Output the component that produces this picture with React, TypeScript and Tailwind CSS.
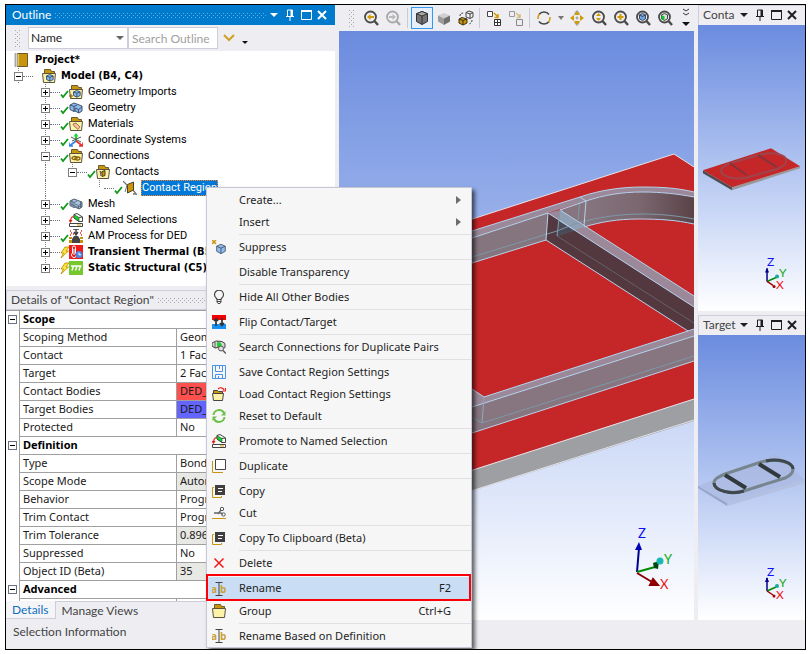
import { useId } from "react";
import type { ReactNode } from "react";

const box = "h-[14px] w-[14px] shrink-0";

function Icon({ name, className = box }: { name: string; className?: string }) {
  return (
    <svg viewBox="0 0 14 14" className={className} fill="none" aria-hidden="true">
      {icons[name]}
    </svg>
  );
}

const folder = (
  <>
    <path d="M2.500 4V.5h6l1 2h3V4" fill="#c8960c" stroke="#6b5a2a" />
    <path d="M.5 4.500h13l-1 9h-11z" fill="#fdf3a8" stroke="#5a5340" />
  </>
);

const cube = (
  <>
    <path d="M7 1l5.500 2.500v6.500L7 13 1.500 10V3.500z" fill="#8fbdf0" stroke="#3d4652" />
    <path d="M1.500 3.500L7 6l5.500-2.500M7 6v7" stroke="#3d4652" />
  </>
);

const smallCube = (
  <g transform="translate(4 5) scale(.55)">
    <path d="M7 1l6 2.500V10l-6 3-6-3V3.500z" fill="#8fbdf0" stroke="#2f4563" strokeWidth="1.600" />
    <path d="M1 3.500L7 6l6-2.500M7 6v7" stroke="#2f4563" strokeWidth="1.600" />
  </g>
);

const named = (
  <>
    <path d="M.5 10.500h13v3H.5z" fill="#fff" stroke="#444" />
    <path d="M8 12h4" stroke="#c8960c" />
    <path d="M5 1.500L8 .5l5.500 3.500v4.500H10L5 5z" fill="#fff" stroke="#444" />
    <path d="M5 1.500l5 3v4L5 5z" fill="#12d52c" stroke="#333" strokeWidth=".6" />
    <path d="M10 4.500l3.500-.5" stroke="#444" />
    <path d="M4.500 3.500C2 4 1.500 6 1.500 8.500M0 7l1.500 2L3 7" stroke="#e8201c" strokeWidth="1.200" />
  </>
);

const copy = (
  <>
    <path d="M2 3.500H.5v10h9V12" stroke="#c8960c" />
    <path d="M3 1h10v10H3z" fill="#3f3f3f" />
    <path d="M6 4.500h5M6 7.500h4" stroke="#fff" />
  </>
);

const rename = (
  <>
    <text x="-1" y="11" fontSize="10" fontWeight="700" fill="#cba13a" fontFamily="Noto Sans, sans-serif">a</text>
    <text x="8" y="11" fontSize="10" fontWeight="700" fill="#cba13a" fontFamily="Noto Sans, sans-serif">b</text>
    <path d="M3.500.5h7M3.500 13.500h7M7 .5v13" stroke="#444" />
  </>
);

const icons: Record<string, ReactNode> = {
  project: (
    <>
      <path d="M3.500.5h10v13h-10z" fill="#c8960c" stroke="#6b5a2a" />
      <path d="M1.500.5v13" stroke="#555" strokeWidth="2" strokeDasharray="1 1" />
      <path d="M4 1v12" stroke="#f5ecc8" />
    </>
  ),
  model: (
    <>
      {folder}
      {smallCube}
    </>
  ),
  imports: (
    <>
      {folder}
      {smallCube}
      <path d="M0 11h4M2 9v4" stroke="#8a6508" />
    </>
  ),
  geometry: (
    <>
      <path d="M1 4l4-2 8 3v5l-3 2-4-2-1 .5-4-2z" fill="#8fb9e8" stroke="#3d5673" />
      <path d="M1 4l4 1.500 3-1.500M5 5.500v5M6 7l3.500 1.500L13 6M9.500 8.500V12M6 7v3" stroke="#3d5673" />
    </>
  ),
  materials: (
    <>
      {folder}
      <path d="M4 7l3-1 4 4-2 2.500L5 9z" fill="#f3c39b" stroke="#a8754a" />
    </>
  ),
  coords: (
    <>
      <path d="M7 8V1" stroke="#1ed83a" strokeWidth="2" />
      <path d="M4.500 3.500L7 0l2.500 3.500z" fill="#1ed83a" />
      <path d="M7 8L1 12.500M0 9.500V13h4" stroke="#2f86e8" strokeWidth="1.600" />
      <path d="M7 8l6 4.500M14 9.500V13h-4" stroke="#e8302c" strokeWidth="1.600" />
      <path d="M2 4l10 5M12 4L3 8" stroke="#555" />
    </>
  ),
  connections: (
    <>
      {folder}
      <ellipse cx="5.500" cy="9" rx="2.500" ry="1.500" stroke="#8a6508" strokeWidth="1.300" />
      <ellipse cx="8.500" cy="9.500" rx="2.500" ry="1.500" stroke="#8a6508" strokeWidth="1.300" />
    </>
  ),
  contacts: (
    <>
      {folder}
      <path d="M4 6l1 5M4 6l5 5" stroke="#555" />
      <path d="M6 6.500l3-1v5l-3 1z" fill="#c8960c" stroke="#4e4020" />
    </>
  ),
  contact: (
    <>
      <path d="M0 0l4 4M10 9l4 5M10 13h3" stroke="#777" strokeWidth="1.300" />
      <path d="M4.500 3.500l6-2.500v8l-6 3z" fill="#c8960c" stroke="#4e4020" />
      <path d="M4 4L2 11" stroke="#777" />
    </>
  ),
  mesh: (
    <>
      <path d="M1 4l4-2 8 3v5l-3 2-4-2-1 .5-4-2z" fill="#a9c3de" stroke="#4d6074" />
      <path d="M1 4l4 1.500 3-1.500M5 5.500v5M6 7l3.500 1.500L13 6M9.500 8.500V12M3 3v6M11.500 5v6M1 6.500l4 2 4 2 4-2.500" stroke="#4d6074" strokeWidth=".8" />
    </>
  ),
  named,
  am: (
    <>
      <path d="M4 0h6M7 0v5M5 3l2 3 2-3" stroke="#444" strokeWidth="1.500" />
      <path d="M1 2h1M12 2h1M2 4h1M11 4h1M1 6h1M12 6h1M4 5h1" stroke="#e22" strokeWidth="1.300" />
      <path d="M3 14v-4l2-3h4l2 3v4z" fill="#444" />
      <path d="M0 8h3v2H0zM0 11h3v3H0zM11 8h3v2h-3zM11 11h3v3h-3z" fill="#c8960c" />
    </>
  ),
  thermal: (
    <>
      <path d="M0 0h14v14H0z" fill="#ee1c1c" />
      <path d="M3.500 8V2.500a1.500 1.500 0 013 0V8a2.500 2.500 0 11-3 0z" stroke="#fff" />
      <path d="M5 4v6" stroke="#fff" />
      <circle cx="10" cy="9.500" r="3.500" fill="#4c86e0" />
      <path d="M10 7.500v2.300h2" stroke="#fff" />
    </>
  ),
  structural: (
    <>
      <path d="M0 0h14v14H0z" fill="#76c82e" />
      <path d="M2 5h10.500M4.500 5L3 9.500M8 5L6.500 9.500M11.500 5L10 9.500" stroke="#fff" strokeWidth="1.400" />
    </>
  ),
  suppress: (
    <>
      <path d="M0 0l4 4M4 0L0 4" stroke="#c8960c" strokeWidth="1.500" />
      <g transform="translate(3.500 3.500) scale(.78)">{cube}</g>
    </>
  ),
  bulb: (
    <>
      <path d="M5 9.500C5 8 2.500 7.500 2.500 4.700a4.500 4.500 0 019 0C11.500 7.500 9 8 9 9.500z" stroke="#444" strokeWidth="1.200" />
      <path d="M5 10v2l1 1.500h2L9 12v-2M5 11.500h4" stroke="#444" />
    </>
  ),
  flip: (
    <>
      <path d="M0 0h14v5H0z" fill="#f40000" />
      <path d="M0 9h14v5H0z" fill="#1690f4" />
      <path d="M4 11V4M2 6l2-2.500L6 6M10 3v7M8 8l2 2.500L12 8" stroke="#333" strokeWidth="1.700" />
    </>
  ),
  search: (
    <>
      <path d="M0 3l4-2 6 .5 3 2v4l-4 2-3-2-3 .5-3-2z" fill="#d5d5d5" stroke="#444" />
      <path d="M3 2v6M6 1v6" stroke="#444" strokeWidth=".8" />
      <path d="M5 3l3-1 2 3-2 2H6L5 6z" fill="#19d12e" />
      <circle cx="9" cy="8.500" r="2.500" fill="#ddd" stroke="#555" />
      <path d="M11 10.500l3 3" stroke="#555" strokeWidth="1.500" />
    </>
  ),
  save: (
    <>
      <path d="M.5.5h13v13H.5z" stroke="#4a93e6" />
      <path d="M3.500 1v5.500h7V1M7.500 1v3M3.500 13V9.500h7V13M6.500 11v2" stroke="#4a93e6" />
    </>
  ),
  load: (
    <>
      <path d="M1.500 6V3.500h4l1 1h4V6" fill="#c8960c" stroke="#444" />
      <path d="M.5 6.500h11l-1 7H1.500z" fill="#fdf3a8" stroke="#444" />
      <path d="M6 2c2-2 5-1.500 6 1M13.500 1v3h-3" stroke="#f01c1c" strokeWidth="1.200" />
    </>
  ),
  reset: (
    <>
      <path d="M1.500 6A5.600 5.600 0 0112 4M12.500 8A5.600 5.600 0 012 10" stroke="#6cc04a" strokeWidth="2" />
      <path d="M13.500 2v4.500H9zM.5 12V7.500H5z" fill="#6cc04a" />
    </>
  ),
  duplicate: (
    <>
      <path d="M.5 2v11.500H11" stroke="#c8960c" />
      <path d="M3.500.5h10v10h-10z" stroke="#444" fill="#fff" />
    </>
  ),
  copy,
  cut: (
    <>
      <path d="M0 12.500h14" stroke="#c8960c" />
      <path d="M2 7h7l1.500 1.500M6 8l3-4" stroke="#666" strokeWidth="1.300" />
      <circle cx="10" cy="3" r="1.700" stroke="#555" />
      <circle cx="11.500" cy="8.500" r="1.700" stroke="#555" />
    </>
  ),
  remove: <path d="M2.500 2.500l9 9M11.500 2.500l-9 9" stroke="#f01818" strokeWidth="1.500" />,
  rename,
  group: folder,
};

function Grip({ color, className = "" }: { color: string; className?: string }) {
  const id = useId();
  return (
    <svg className={className} aria-hidden="true">
      <defs>
        <pattern id={id} width="4" height="4" patternUnits="userSpaceOnUse">
          <path d="M0 0h1v1H0zM2 2h1v1H2z" fill={color} />
        </pattern>
      </defs>
      <rect width="100%" height="100%" fill={`url(#${id})`} />
    </svg>
  );
}

function WindowButtons({ title }: { title: string }) {
  return (
    <div className="flex shrink-0 items-center">
      <button aria-label={`${title} options`} className="w-4">
        <svg viewBox="0 0 16 16" className="h-4 w-4" fill="currentColor">
          <path d="M4 6h8l-4 4z" />
        </svg>
      </button>
      <button aria-label={`Pin ${title}`} className="w-4">
        <svg viewBox="0 0 16 16" className="h-4 w-4" fill="none" stroke="currentColor">
          <path d="M5.500 9V3h5v6M4 9.500h8M8 10v4" />
          <path d="M9.500 3v6" strokeWidth="2" />
        </svg>
      </button>
      <button aria-label={`Maximize ${title}`} className="w-4">
        <svg viewBox="0 0 16 16" className="h-4 w-4" fill="none" stroke="currentColor">
          <path d="M3.500 4v8.500h10V4" />
          <path d="M3 4h11" strokeWidth="2" />
        </svg>
      </button>
      <button aria-label={`Close ${title}`} className="w-4">
        <svg viewBox="0 0 16 16" className="h-4 w-4" fill="none" stroke="currentColor" strokeWidth="2">
          <path d="M4 4l8 8M12 4l-8 8" />
        </svg>
      </button>
    </div>
  );
}

type Node = { label: string; icon: string; level: number; toggle?: "+" | "-"; mark?: "check" | "bolt"; bold?: boolean; last?: boolean; selected?: boolean };

const tree: Node[] = [
  { label: "Model (B4, C4)", icon: "model", level: 0, toggle: "-", bold: true },
  { label: "Geometry Imports", icon: "imports", level: 1, toggle: "+", mark: "check" },
  { label: "Geometry", icon: "geometry", level: 1, toggle: "+", mark: "check" },
  { label: "Materials", icon: "materials", level: 1, toggle: "+", mark: "check" },
  { label: "Coordinate Systems", icon: "coords", level: 1, toggle: "+", mark: "check" },
  { label: "Connections", icon: "connections", level: 1, toggle: "-", mark: "check" },
  { label: "Contacts", icon: "contacts", level: 2, toggle: "-", mark: "check", last: true },
  { label: "Contact Region", icon: "contact", level: 3, mark: "check", last: true, selected: true },
  { label: "Mesh", icon: "mesh", level: 1, toggle: "+", mark: "check" },
  { label: "Named Selections", icon: "named", level: 1, toggle: "+" },
  { label: "AM Process for DED", icon: "am", level: 1, toggle: "+", mark: "check" },
  { label: "Transient Thermal (B5)", icon: "thermal", level: 1, toggle: "+", mark: "bolt", bold: true },
  { label: "Static Structural (C5)", icon: "structural", level: 1, toggle: "+", mark: "bolt", bold: true, last: true },
];

const treeBold = "font-['DejaVu_Sans_Condensed','DejaVu_Sans',sans-serif] font-bold";

function TreeRow({ node }: { node: Node }) {
  return (
    <li className="flex h-4 items-center whitespace-nowrap">
      {Array.from({ length: node.level }, (_, i) => (
        <span key={i} className="flex h-4 w-[27px] shrink-0 pl-1">
          {i === 1 && <span className="h-4 border-l border-dotted border-gray-500" />}
        </span>
      ))}
      <button aria-label={`Toggle ${node.label}`} className="h-4 w-[9px] shrink-0">
        <svg viewBox="0 0 9 16" className="h-4 w-[9px]" fill="none" shapeRendering="crispEdges">
          <path d={node.last ? "M4.500 0v8" : "M4.500 0v16"} stroke="#808080" strokeDasharray="1 1" />
          {node.toggle && <path d="M.5 4.500h8v8h-8z" fill="#fff" stroke="#808080" />}
          {node.toggle && <path d={node.toggle === "+" ? "M2 8.500h5M4.500 6v5" : "M2 8.500h5"} stroke="#000" />}
        </svg>
      </button>
      <span className="w-[10px] shrink-0 border-t border-dotted border-gray-500" />
      <svg viewBox="0 0 9 14" className="h-[14px] w-[9px] shrink-0" fill="none" aria-hidden="true">
        {node.mark === "check" && <path d="M1 9.500l2 2.500L8 6" stroke="#0f9a1c" strokeWidth="1.800" />}
        {node.mark === "bolt" && <path d="M5 2h4L6 6h2.500L1 13l2.500-5H1z" fill="#ffe23a" stroke="#b58a00" strokeWidth=".8" />}
      </svg>
      <Icon name={node.icon} />
      <span
        className={
          node.selected
            ? "ml-1 bg-[#0078d7] px-px leading-4 text-white outline-1 -outline-offset-1 outline-dotted outline-[#ff8728]"
            : node.bold
              ? `ml-[5px] ${treeBold}`
              : "ml-[5px]"
        }
      >
        {node.label}
      </span>
    </li>
  );
}

const details = [
  {
    title: "Scope",
    rows: [
      ["Scoping Method", "Geometry Selection", ""],
      ["Contact", "1 Face", ""],
      ["Target", "2 Faces", ""],
      ["Contact Bodies", "DED_Base", "bg-[#ff5050]"],
      ["Target Bodies", "DED_Part", "bg-[#6464ff]"],
      ["Protected", "No", ""],
    ],
  },
  {
    title: "Definition",
    rows: [
      ["Type", "Bonded", ""],
      ["Scope Mode", "Automatic", "bg-[#e8e8e4]"],
      ["Behavior", "Program Controlled", ""],
      ["Trim Contact", "Program Controlled", ""],
      ["Trim Tolerance", "0.896 mm", "bg-[#e8e8e4]"],
      ["Suppressed", "No", ""],
      ["Object ID (Beta)", "35", "bg-[#e8e8e4]"],
    ],
  },
  { title: "Advanced", rows: [["", "", ""]] },
];

function DetailsTable() {
  const line = "h-[18px] border-b border-l border-[#a0a0a0] p-0 pl-[3px] text-left align-top leading-[15px]";
  return (
    <table className="w-full table-fixed border-separate border-spacing-0 whitespace-nowrap bg-white text-[11px] text-[#1a1a1a]">
      <colgroup>
        <col className="w-[13px]" />
        <col className="w-[157px]" />
        <col />
      </colgroup>
      {details.map((section) => (
        <tbody key={section.title}>
          <tr>
            <td className="p-0 pt-1 align-top">
              <button aria-label={`Toggle ${section.title}`} className="ml-[2px] flex h-[9px] w-[9px] items-center justify-center border border-gray-500">
                <span className="h-px w-[5px] bg-black" />
              </button>
            </td>
            <th colSpan={2} className={`${line} font-bold text-black`}>
              {section.title}
            </th>
          </tr>
          {section.rows.map(([label, value, bg]) => (
            <tr key={label}>
              <td className="p-0" />
              <th className={`${line} font-normal`}>{label}</th>
              <td className={`${line} ${bg} overflow-hidden`}>{value}</td>
            </tr>
          ))}
        </tbody>
      ))}
    </table>
  );
}

type Item = { label: string; icon?: string; keys?: string; submenu?: boolean; active?: boolean };

const menu: Item[][] = [
  [
    { label: "Create...", submenu: true },
    { label: "Insert", submenu: true },
  ],
  [{ label: "Suppress", icon: "suppress" }],
  [{ label: "Disable Transparency" }],
  [{ label: "Hide All Other Bodies", icon: "bulb" }],
  [{ label: "Flip Contact/Target", icon: "flip" }],
  [{ label: "Search Connections for Duplicate Pairs", icon: "search" }],
  [
    { label: "Save Contact Region Settings", icon: "save" },
    { label: "Load Contact Region Settings", icon: "load" },
    { label: "Reset to Default", icon: "reset" },
  ],
  [{ label: "Promote to Named Selection", icon: "named" }],
  [{ label: "Duplicate", icon: "duplicate" }],
  [
    { label: "Copy", icon: "copy" },
    { label: "Cut", icon: "cut" },
  ],
  [{ label: "Copy To Clipboard (Beta)", icon: "copy" }],
  [{ label: "Delete", icon: "remove" }],
  [
    { label: "Rename", icon: "rename", keys: "F2", active: true },
    { label: "Group", icon: "group", keys: "Ctrl+G" },
  ],
  [{ label: "Rename Based on Definition", icon: "rename" }],
];

function ContextMenu() {
  return (
    <div
      role="menu"
      className="absolute left-[200px] top-[182px] z-10 w-[266px] border border-[#c6c8d8] bg-[#f6f6f6] pt-px text-[11px] text-[#1e1e1e] shadow-[3px_3px_4px_rgba(0,0,0,0.6)]"
    >
      {menu.map((group, i) => (
        <div key={i}>
          {i > 0 && <div className="mb-px ml-8 border-b border-[#dfe0e4] pt-px" />}
          {group.map((item) => (
            <button
              key={item.label}
              role="menuitem"
              className={`relative flex w-full items-center pl-[5px] text-left ${item.active ? "h-[23px] bg-[#c9def5]" : "h-[22px]"}`}
            >
              <span className="w-[27px] shrink-0">{item.icon && <Icon name={item.icon} />}</span>
              <span className="grow">{item.label}</span>
              {item.keys && <span className="pr-5">{item.keys}</span>}
              {item.submenu && (
                <svg viewBox="0 0 5 8" className="mr-[10px] h-2 w-[5px]" fill="#6d6d6d">
                  <path d="M0 0l5 4-5 4z" />
                </svg>
              )}
              {item.active && <span className="absolute -bottom-px -left-px -top-[3px] right-0 z-10 border-2 border-[#fb0007]" />}
            </button>
          ))}
        </div>
      ))}
    </div>
  );
}

const lens = (color: string) => (
  <>
    <circle cx="7.500" cy="7" r="5.500" stroke={color} strokeWidth="1.800" />
    <path d="M11.500 11l3.500 4" stroke={color} strokeWidth="2.400" />
  </>
);

function Tool({ label, children, active }: { label: string; children: ReactNode; active?: boolean }) {
  return (
    <button
      aria-label={label}
      className={`flex h-[22px] w-[22px] shrink-0 items-center justify-center ${active ? "border border-[#3397ee] bg-[#e4effa]" : ""}`}
    >
      <svg viewBox="0 0 16 16" className="h-4 w-4 shrink-0" fill="none">
        {children}
      </svg>
    </button>
  );
}

function Divider() {
  return <span className="mx-[2px] h-5 w-px shrink-0 bg-[#c8cad8]" />;
}

function Toolbar() {
  return (
    <div className="flex h-[26px] shrink-0 items-center overflow-hidden pl-[10px]">
      <Grip color="#a8a8a8" className="mr-[6px] h-[17px] w-[5px] shrink-0" />
      <Tool label="Previous view">
        {lens("#4a4a4a")}
        <path d="M4 7l3.500-3v2H11v2H7.500v2z" fill="#d09a00" />
      </Tool>
      <Tool label="Next view">
        {lens("#a9a9a9")}
        <path d="M11 7L7.500 4v2H4v2h3.500v2z" fill="#b9b9b9" />
      </Tool>
      <span className="w-px" />
      <Divider />
      <span className="w-px" />
      <Tool label="Shaded exterior and edges" active>
        <path d="M8 1.500l5.500 2.200v7.800L8 14.500l-5.500-3V3.700z" fill="#737373" stroke="#333" />
        <path d="M8 1.500l5.500 2.200L8 6 2.500 3.700z" fill="#a9a9a9" stroke="#333" />
        <path d="M8 6v8.500" stroke="#333" />
      </Tool>
      <Tool label="Shaded exterior">
        <path d="M8 3l6 2.500-6 3-6-3z" fill="#cfcfcf" />
        <path d="M2 5.500l6 3V15l-6-3.500z" fill="#9b9b9b" />
        <path d="M14 5.500l-6 3V15l6-3.500z" fill="#6f6f6f" />
      </Tool>
      <Tool label="Wireframe">
        <path d="M8 2.500l3-1.500 4 1.500V7l-3 1.500L8 7zM8 2.500L12 4l3-1.500M12 4v4.500" stroke="#444" />
        <path d="M1 9l3-1.500L9 9v4l-4 2-4-2z" fill="#c8960c" stroke="#3a3013" />
        <path d="M1 9l4 1.500L9 9M5 10.500V15" stroke="#3a3013" />
        <path d="M2 6c0-2 1-3 4-3M14 10c0 2-1 3.500-3 4" stroke="#444" strokeDasharray="2 1" />
      </Tool>
      <Divider />
      <span className="w-px" />
      <Tool label="Show mesh">
        <path d="M1.500 1.500h5v5h-5z" stroke="#444" fill="#fff" />
        <path d="M8 3l4 4M12 4v3.500H8.500" stroke="#d09a00" strokeWidth="1.500" />
        <path d="M8.500 9.500h6v6h-6zM11.500 9.500v6M8.500 12.500h6" stroke="#333" fill="#fff" />
      </Tool>
      <Tool label="Hide mesh">
        <path d="M1.500 1.500h5v5h-5z" stroke="#999" />
        <path d="M8 3l4 4M12 4v3.500H8.500" stroke="#d5bd83" strokeWidth="1.500" />
        <path d="M8.500 9.500h6v6h-6z" stroke="#888" />
      </Tool>
      <Divider />
      <span className="w-px" />
      <Tool label="Rotate">
        <path d="M3 4.500a6.200 6.200 0 0110 0M13 11.500a6.200 6.200 0 01-10 0" stroke="#444" strokeWidth="1.600" />
        <path d="M3.500 4C2 5.500 1.800 7 2 9M12.500 12c1.500-1.500 1.700-3 1.500-5" stroke="#d09a00" strokeWidth="1.500" />
      </Tool>
      <svg viewBox="0 0 11 8" className="h-2 w-[11px] shrink-0" fill="#777">
        <path d="M3 2h6L6 6z" />
      </svg>
      <Tool label="Pan">
        <path d="M8 1l3 4H5zM8 15l3-4H5zM1 8l4-3v6zM15 8l-4-3v6z" fill="#d09a00" />
        <path d="M6.500 8h3M8 6.500v3M5.500 3.500L8 .5l2.500 3M5.500 12.500l2.500 3 2.500-3" stroke="#777" strokeWidth=".7" />
      </Tool>
      <Tool label="Zoom">
        {lens("#4a4a4a")}
        <path d="M7.500 3L10 6H5zM7.500 11L10 8H5z" fill="#d09a00" />
      </Tool>
      <Tool label="Zoom in">
        {lens("#4a4a4a")}
        <path d="M7.500 4v6M4.500 7h6" stroke="#d09a00" strokeWidth="2" />
      </Tool>
      <Tool label="Zoom to fit">
        {lens("#4a4a4a")}
        <path d="M7.500 3.500l3 1.300v4L7.500 10.500l-3-1.700v-4z" fill="#71a7ea" stroke="#3d4652" />
        <path d="M4.500 5l3 1.500 3-1.500" stroke="#3d4652" />
      </Tool>
      <Tool label="Zoom to selection">
        {lens("#4a4a4a")}
        <path d="M7.500 3.500l3 1.300v4L7.500 10.500l-3-1.700v-4z" fill="#ddd" stroke="#444" />
        <path d="M4.500 5l3 1.500v4l-3-1.700z" fill="#12c42c" />
      </Tool>
      <svg viewBox="0 0 12 20" className="ml-1 h-5 w-3 shrink-0" fill="none">
        <path d="M3 1l3 2 3-2M3 5l3 2 3-2" stroke="#333" />
        <path d="M2 14h8l-4 4z" fill="#111" />
      </svg>
    </div>
  );
}

function SmallTriad() {
  return (
    <g fontFamily="Lato, sans-serif" fontSize="12" strokeWidth="1.500" fill="none">
      <path d="M69 256v-13" stroke="#00008c" />
      <path d="M67 247l2-5 2 5z" fill="#00008c" />
      <path d="M69 256l9-4" stroke="#008c00" />
      <circle cx="79" cy="251" r="2" fill="#1aa8a0" />
      <path d="M69 256l6 4" stroke="#a00000" />
      <circle cx="76" cy="261" r="1.500" fill="#a00000" />
      <text x="69" y="241" fill="#0f0ff0">Z</text>
      <text x="81" y="252" fill="#10a810">Y</text>
      <text x="78" y="264" fill="#f01010">X</text>
    </g>
  );
}

const sky = "min-h-0 flex-1 overflow-hidden bg-linear-to-b from-[#6b8bde] to-white";

function ContactView() {
  return (
    <svg viewBox="0 0 107 285" preserveAspectRatio="xMidYMin slice" className="h-full w-full" fill="none" role="img" aria-label="Contact body">
      <path d="M5 145l29 17v3L5 148z" fill="#4b4d50" />
      <path d="M34 162l68-21v2l-68 22z" fill="#999" />
      <path d="M5 145l68-22 29 18-68 21z" fill="#c52728" />
      <path d="M23 145C23 142 27 140 32 138L60 130C74 126 88 129 88 135C88 139 86 141 78 144L50 152C38 155 23 152 23 145z" stroke="#9c454e" strokeWidth="2" />
      <path d="M32 138l17 12M60 130l19 12" stroke="#85323a" strokeWidth="2" />
      <SmallTriad />
    </svg>
  );
}

function TargetView() {
  return (
    <svg viewBox="0 0 107 286" preserveAspectRatio="xMidYMin slice" className="h-full w-full" fill="none" role="img" aria-label="Target body">
      <path d="M0 151l78-32 29 26-78 23z" fill="#a9b6dc" fillOpacity=".6" />
      <path d="M0 151l29 17v3L0 153z" fill="#98a4cc" />
      <path d="M29 168l78-23v3l-78 23z" fill="#b4c0e2" />
      <path d="M16 148C16 144 20 142 27 139L60 128C76 122 95 127 95 134C95 139 92 141 87 143L49 155C34 160 16 156 16 148z" stroke="#76858e" strokeWidth="3" />
      <path d="M16 148C16 156 34 160 46 156M68 126C80 123 95 127 95 134" stroke="#3f484c" strokeWidth="3" />
      <path d="M27 140l21 13M61 129l21 13" stroke="#32393c" strokeWidth="4" />
      <SmallTriad />
    </svg>
  );
}

function MainView() {
  return (
    <svg viewBox="339 31 355 589" preserveAspectRatio="xMaxYMin slice" className="h-full w-full" fill="none" role="img" aria-label="Contact region model">
      <defs>
        <linearGradient id="bend" x1="584" x2="694" y1="0" y2="0" gradientUnits="userSpaceOnUse">
          <stop stopColor="#86757f" />
          <stop offset=".5" stopColor="#7b6770" />
          <stop offset="1" stopColor="#5a4348" />
        </linearGradient>
      </defs>
      <path d="M339 513l355-114v22L339 533z" fill="#9d9fa2" />
      <path d="M339 262l335-108 20 13v232L339 513z" fill="#c52728" />
      <path d="M339 262l335-108 20 13M339 513l355-114M339 533l355-113" stroke="#e3e3ea" />

      {/* back wall and bend */}
      <path d="M472 231l108-34c20-7 42-10 62-10 20 0 36 1 52 5v5c-16-3-32-5-52-5-20 0-38 3-56 9l-38 12-76 25z" fill="#9b8898" />
      <path d="M472 238l76-25-2 27-74 23z" fill="#85757f" />
      <path d="M560 210l26-9c18-6 36-9 56-9 20 0 36 2 52 5v27c-18-3-34-5-56-5-20 0-38 3-54 8l-27 9z" fill="url(#bend)" />

      {/* cross rib */}
      <path d="M548 213l146 94v24h-6l-142-91z" fill="#53393f" />
      <path d="M548 213l12-3 134 86v11z" fill="#9b8898" />
      <path d="M560 210l-3 26 27-9z" fill="#8f9fb4" />
      <path d="M559 221l-2 15 18-5z" fill="#4a4b56" />

      {/* front wall */}
      <path d="M472 389l12 8 210-68v32l-222 72z" fill="#87757f" />
      <path d="M472 389l12 8 210-68v7l-222 71z" fill="#9b8898" />

      <g stroke="#7d98a8">
        <path d="M472 257l85-26 20-8c22-6 44-9 65-9 20 0 36 2 52 5" />
        <path d="M580 197l-2 23M472 417l10 6 212-67" />
        <path d="M557 236l137 87" stroke="#665f6c" />
      </g>
      <g stroke="#b4d3ee">
        <path d="M472 231l108-34c20-7 42-10 62-10 20 0 36 1 52 5" />
        <path d="M472 238l76-25M560 210l26-9c18-6 36-9 56-9 20 0 36 2 52 5M580 197l6 4-2 25" />
        <path d="M472 263l74-23 2-27 146 94M560 210l134 86M546 240l142 91M584 227c16-5 34-8 54-8 22 0 38 1 56 5" />
        <path d="M560 210l-3 26" stroke="#7d98a8" />
        <path d="M472 389l12 8 210-68M472 407l222-71M472 433l222-72" />
        <path d="M484 397l-2 26" stroke="#8fa9ba" />
      </g>

      <g strokeWidth="2" fontFamily="Lato, sans-serif" fontSize="13">
        <path d="M637 572l2-24" stroke="#00008c" />
        <path d="M635 550l4-8 3 8z" fill="#0000b4" />
        <path d="M637 572l18-5" stroke="#008c00" />
        <path d="M653 563l6-2-1 8-4-1z" fill="#004a10" />
        <circle cx="660" cy="561" r="3.500" fill="#18b8b4" />
        <path d="M637 573l15 9" stroke="#8c0000" />
        <path d="M653 579l5 6h-8z" fill="#a00000" stroke="#8c0000" />
        <text x="638" y="538" fill="#0f0ff0">Z</text>
        <text x="664" y="564" fill="#10a810">Y</text>
        <text x="660" y="589" fill="#f01010">X</text>
      </g>
    </svg>
  );
}

function ViewHeader({ title }: { title: string }) {
  return (
    <header className="flex h-5 shrink-0 items-center border-l border-t border-[#cccedb] pb-px pl-1 pr-[5px]">
      <h2 className="min-w-0 flex-1 whitespace-nowrap">{title}</h2>
      <span className="flex text-[#1e1e1e]">
        <WindowButtons title={`${title} view`} />
      </span>
    </header>
  );
}

export default function App() {
  return (
    <div className="h-screen bg-white py-1 pl-[5px] pr-1 font-['Lato','Open_Sans',sans-serif] text-xs text-[#444]">
      <div className="relative flex h-full overflow-hidden border border-black bg-[#eeeef2]">
        <aside className="flex w-[329px] shrink-0 flex-col">
          <header className="flex h-5 shrink-0 items-center bg-[#007acc] pl-[6px] pr-[5px] text-white">
            <h2>Outline</h2>
            <Grip color="#66b1e4" className="ml-1 h-[5px] min-w-0 flex-1" />
            <WindowButtons title="Outline" />
          </header>
          <div className="flex h-[26px] shrink-0 items-center pl-[9px]">
            <Grip color="#a8a8a8" className="mr-2 h-[17px] w-[5px] shrink-0" />
            <div className="relative">
              <select aria-label="Filter by" className="h-[22px] w-[100px] appearance-none border border-[#cccedb] bg-white pl-[2px] text-xs text-[#1e1e1e]">
                <option>Name</option>
              </select>
              <svg viewBox="0 0 8 4" className="pointer-events-none absolute right-1 top-[9px] h-1 w-2" fill="#666">
                <path d="M0 0h8L4 4z" />
              </svg>
            </div>
            <input
              aria-label="Search outline"
              placeholder="Search Outline"
              className="h-[22px] w-[90px] border border-[#cccedb] bg-white pl-[3px] text-xs placeholder:text-[#a0a0a0]"
            />
            <button aria-label="Expand search" className="ml-1">
              <svg viewBox="0 0 14 10" className="h-[10px] w-[14px]" fill="none" stroke="#cf9f26" strokeWidth="2">
                <path d="M2 2l5 5 5-5" />
              </svg>
            </button>
            <svg viewBox="0 0 6 12" className="ml-[6px] h-3 w-[6px]" fill="#111">
              <path d="M0 9h6l-3 3z" />
            </svg>
          </div>
          <ul className="shrink-0 bg-white pb-[10px] pl-2 pt-px font-['Roboto','Noto_Sans',sans-serif] text-[11px] text-black">
            <li className="flex h-4 items-center">
              <Icon name="project" />
              <span className={`ml-[7px] ${treeBold}`}>Project*</span>
            </li>
            {tree.map((node) => (
              <TreeRow key={node.label} node={node} />
            ))}
          </ul>
          <header className="mt-1 flex h-5 shrink-0 items-center border border-[#cccedb] px-1">
            <h2>Details of "Contact Region"</h2>
            <Grip color="#a8a8a8" className="ml-1 h-[5px] min-w-0 flex-1" />
          </header>
          <div className="min-h-0 flex-1 overflow-hidden border-t border-[#a0a0a0] font-['Noto_Sans',sans-serif]">
            <DetailsTable />
          </div>
          <div role="tablist" className="flex h-[18px] shrink-0">
            <button role="tab" aria-selected="true" className="border-b border-r border-[#cccedb] bg-[#f5f5f7] px-[6px] leading-4 text-[#0e70c0]">
              Details
            </button>
            <button role="tab" aria-selected="false" className="border-t border-[#cccedb] px-[6px] leading-4">
              Manage Views
            </button>
            <span className="flex-1 border-t border-[#cccedb]" />
          </div>
          <footer className="flex h-[30px] shrink-0 items-center pb-1 pl-[7px]">Selection Information</footer>
        </aside>

        <main className="ml-1 flex min-w-0 flex-1 flex-col pb-[29px]">
          <Toolbar />
          <div className={sky}>
            <MainView />
          </div>
        </main>

        <section className="ml-1 flex w-[107px] shrink-0 flex-col gap-1 pb-[29px]">
          <div className="flex min-h-0 flex-1 flex-col">
            <ViewHeader title="Conta" />
            <div className={sky}>
              <ContactView />
            </div>
          </div>
          <div className="flex min-h-0 flex-1 flex-col">
            <ViewHeader title="Target" />
            <div className={sky}>
              <TargetView />
            </div>
          </div>
        </section>

        <div className="font-['Noto_Sans',sans-serif]">
          <ContextMenu />
        </div>
      </div>
    </div>
  );
}
